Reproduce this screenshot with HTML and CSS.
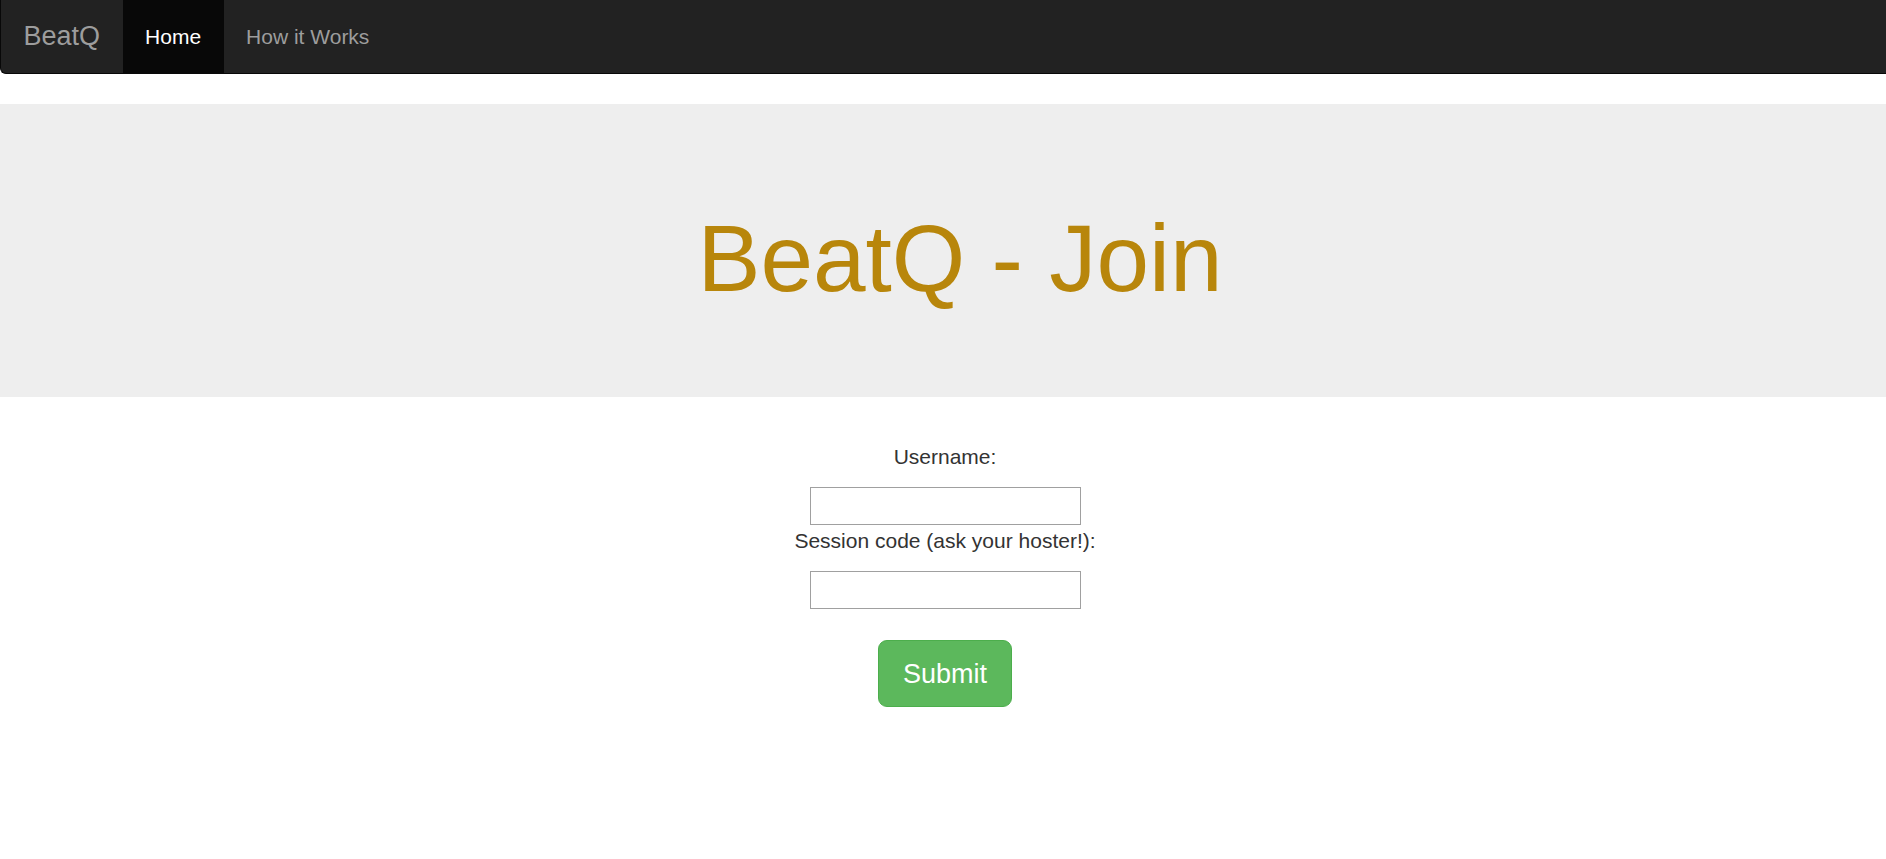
FILE: index.html
```html
<!DOCTYPE html>
<html lang="en">
<head>
<meta charset="utf-8">
<title>BeatQ - Join</title>
<link rel="stylesheet" href="styles.css">
</head>
<body>
<nav class="navbar">
  <a class="brand" href="#">BeatQ</a>
  <ul class="nav">
    <li class="active"><a href="#">Home</a></li>
    <li><a href="#">How it Works</a></li>
  </ul>
</nav>
<div class="jumbotron">
  <h1 class="title">BeatQ - Join</h1>
</div>
<form class="join-form">
  <label class="field-label" for="username">Username:</label>
  <input class="field-input field-input--first" id="username" type="text">
  <label class="field-label" for="code">Session code (ask your hoster!):</label>
  <input class="field-input" id="code" type="text">
  <button class="btn-submit" type="button">Submit</button>
</form>
</body>
</html>
```
FILE: styles.css
```css
* { box-sizing: border-box; }
html, body { margin: 0; padding: 0; }
body {
  font-family: "Liberation Sans", Arial, Helvetica, sans-serif;
  font-size: 21px;
  line-height: 30px;
  color: #333;
  background: #fff;
}
.navbar {
  display: flex;
  align-items: stretch;
  height: 74px;
  background: #222;
  border-left: 1px solid #080808;
  border-bottom: 1px solid #080808;
  border-bottom-left-radius: 6px;
}
.brand {
  display: block;
  padding: 0 22.5px;
  font-size: 27px;
  line-height: 73px;
  color: #9d9d9d;
  text-decoration: none;
}
.nav {
  display: flex;
  margin: 0;
  padding: 0;
  list-style: none;
}
.nav li a {
  display: block;
  padding: 0 22.5px;
  line-height: 73px;
  font-size: 21px;
  color: #9d9d9d;
  text-decoration: none;
}
.nav li.active a {
  background: #080808;
  color: #fff;
}
.jumbotron {
  margin-top: 30px;
  height: 293px;
  padding: 72px 30px 72px 64px;
  background: #eee;
  text-align: center;
}
.title {
  margin: 30px 0 15px;
  font-size: 94.5px;
  line-height: 104px;
  font-weight: 500;
  color: #b8860b;
}
.join-form {
  display: flex;
  flex-direction: column;
  align-items: center;
  padding-top: 45px;
  padding-left: 4px;
}
.field-label {
  display: block;
  height: 30px;
  line-height: 30px;
  font-weight: normal;
}
.field-input {
  display: block;
  width: 271px;
  height: 38px;
  margin: 15px 0 1px;
  padding: 2px 4px;
  border: 1px solid #a0a0a0;
  background: #fff;
  font-family: inherit;
  font-size: 21px;
}
.btn-submit {
  margin-top: 30px;
  height: 67px;
  padding: 0 24px;
  font-family: inherit;
  font-size: 27px;
  line-height: 36px;
  color: #fff;
  background: #5cb85c;
  border: 1px solid #4cae4c;
  border-radius: 9px;
  cursor: pointer;
}
```
